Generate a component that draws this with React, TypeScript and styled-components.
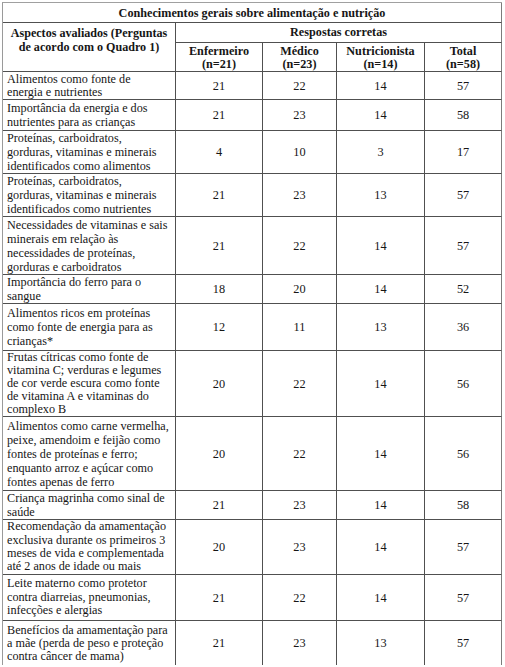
import React from "react";
import styled, { createGlobalStyle } from "styled-components";

type Row = {
  label: string[];
  values: string[];
  height: number;
  lineHeight?: number;
};

const rows: Row[] = [
  { label: ["Alimentos como fonte de", "energia e nutrientes"], values: ["21", "22", "14", "57"], height: 28, lineHeight: 13 },
  { label: ["Importância da energia e dos", "nutrientes para as crianças"], values: ["21", "23", "14", "58"], height: 31 },
  { label: ["Proteínas, carboidratos,", "gorduras, vitaminas e minerais", "identificados como alimentos"], values: ["4", "10", "3", "17"], height: 42 },
  { label: ["Proteínas, carboidratos,", "gorduras, vitaminas e minerais", "identificados como nutrientes"], values: ["21", "23", "13", "57"], height: 43 },
  { label: ["Necessidades de vitaminas e sais", "minerais em relação às", "necessidades de proteínas,", "gorduras e carboidratos"], values: ["21", "22", "14", "57"], height: 58 },
  { label: ["Importância do ferro para o", "sangue"], values: ["18", "20", "14", "52"], height: 29 },
  { label: ["Alimentos ricos em proteínas", "como fonte de energia para as", "crianças*"], values: ["12", "11", "13", "36"], height: 47 },
  { label: ["Frutas cítricas como fonte de", "vitamina C; verduras e legumes", "de cor verde escura como fonte", "de vitamina A e vitaminas do", "complexo B"], values: ["20", "22", "14", "56"], height: 66, lineHeight: 13 },
  { label: ["Alimentos como carne vermelha,", "peixe, amendoim e feijão como", "fontes de proteínas e ferro;", "enquanto arroz e açúcar como", "fontes apenas de ferro"], values: ["20", "22", "14", "56"], height: 74, lineHeight: 14 },
  { label: ["Criança magrinha como sinal de", "saúde"], values: ["21", "23", "14", "58"], height: 28 },
  { label: ["Recomendação da amamentação", "exclusiva durante os primeiros 3", "meses de vida e complementada", "até 2 anos de idade ou mais"], values: ["20", "23", "14", "57"], height: 55, lineHeight: 13.4 },
  { label: ["Leite materno como protetor", "contra diarreias, pneumonias,", "infecções e alergias"], values: ["21", "22", "14", "57"], height: 46, lineHeight: 13.5 },
  { label: ["Benefícios da amamentação para", "a mãe (perda de peso e proteção", "contra câncer de mama)"], values: ["21", "23", "13", "57"], height: 44, lineHeight: 13 },
];

const groups = [
  { name: "Enfermeiro", n: "(n=21)" },
  { name: "Médico", n: "(n=23)" },
  { name: "Nutricionista", n: "(n=14)" },
  { name: "Total", n: "(n=58)" },
];

const colWidths = [173, 87, 74, 88, 77];

const GlobalStyle = createGlobalStyle`
  html, body {
    margin: 0;
    padding: 0;
    background: #ffffff;
  }
`;

const Page = styled.div`
  padding: 2px 0 0 2px;
  font-family: "Liberation Serif", "Times New Roman", serif;
  color: #161616;
`;

const Table = styled.table`
  border-collapse: separate;
  border-spacing: 0;
  table-layout: fixed;
  width: 500px;
  border-top: 1px solid #a0a0a0;
  border-left: 1px solid #9a9a9a;
`;

const Cell = styled.td`
  box-sizing: border-box;
  padding: 0;
  border-right: 1px solid #505050;
  border-bottom: 1px solid #505050;
  &:last-child {
    border-right-color: #7c7c7c;
  }
`;

const TitleCell = styled(Cell)`
  height: 20px;
  font-size: 12.2px;
  font-weight: bold;
  text-align: center;
  vertical-align: middle;
  padding-top: 2px;
`;

const AspectHead = styled(Cell)`
  font-size: 12.1px;
  font-weight: bold;
  line-height: 14px;
  text-align: center;
  vertical-align: top;
  padding-top: 3px;
`;

const GroupHead = styled(Cell)`
  height: 20px;
  font-size: 12.2px;
  font-weight: bold;
  text-align: center;
  vertical-align: middle;
`;

const SubHead = styled(Cell)`
  height: 29px;
  font-size: 12.2px;
  font-weight: bold;
  line-height: 12.6px;
  text-align: center;
  vertical-align: middle;
  padding-top: 1px;
`;

const BodyRow = styled.tr<{ $height: number; $open: boolean }>`
  height: ${(p) => p.$height}px;
  & > td {
    border-bottom: ${(p) => (p.$open ? "none" : "1px solid #505050")};
  }
`;

const LabelCell = styled(Cell)<{ $lineHeight: number }>`
  font-size: 12.2px;
  line-height: ${(p) => p.$lineHeight}px;
  padding: 0 2px 0 4px;
  vertical-align: middle;
  white-space: nowrap;
`;

const Line = styled.span`
  display: block;
`;

const NumCell = styled(Cell)`
  font-size: 12.3px;
  text-align: center;
  vertical-align: middle;
  padding-top: 1px;
`;

export default function App() {
  return (
    <Page>
      <GlobalStyle />
      <Table>
        <colgroup>
          {colWidths.map((w, i) => (
            <col key={i} style={{ width: w }} />
          ))}
        </colgroup>
        <thead>
          <tr>
            <TitleCell colSpan={5}>Conhecimentos gerais sobre alimentação e nutrição</TitleCell>
          </tr>
          <tr>
            <AspectHead rowSpan={2}>
              Aspectos avaliados (Perguntas
              <br />
              de acordo com o Quadro 1)
            </AspectHead>
            <GroupHead colSpan={4}>Respostas corretas</GroupHead>
          </tr>
          <tr>
            {groups.map((g) => (
              <SubHead key={g.name}>
                {g.name}
                <br />
                {g.n}
              </SubHead>
            ))}
          </tr>
        </thead>
        <tbody>
          {rows.map((r, i) => (
            <BodyRow key={i} $height={r.height} $open={i === rows.length - 1}>
              <LabelCell $lineHeight={r.lineHeight ?? 14}>
                {r.label.map((l, j) => (
                  <Line key={j}>{l}</Line>
                ))}
              </LabelCell>
              {r.values.map((v, j) => (
                <NumCell key={j}>{v}</NumCell>
              ))}
            </BodyRow>
          ))}
        </tbody>
      </Table>
    </Page>
  );
}
